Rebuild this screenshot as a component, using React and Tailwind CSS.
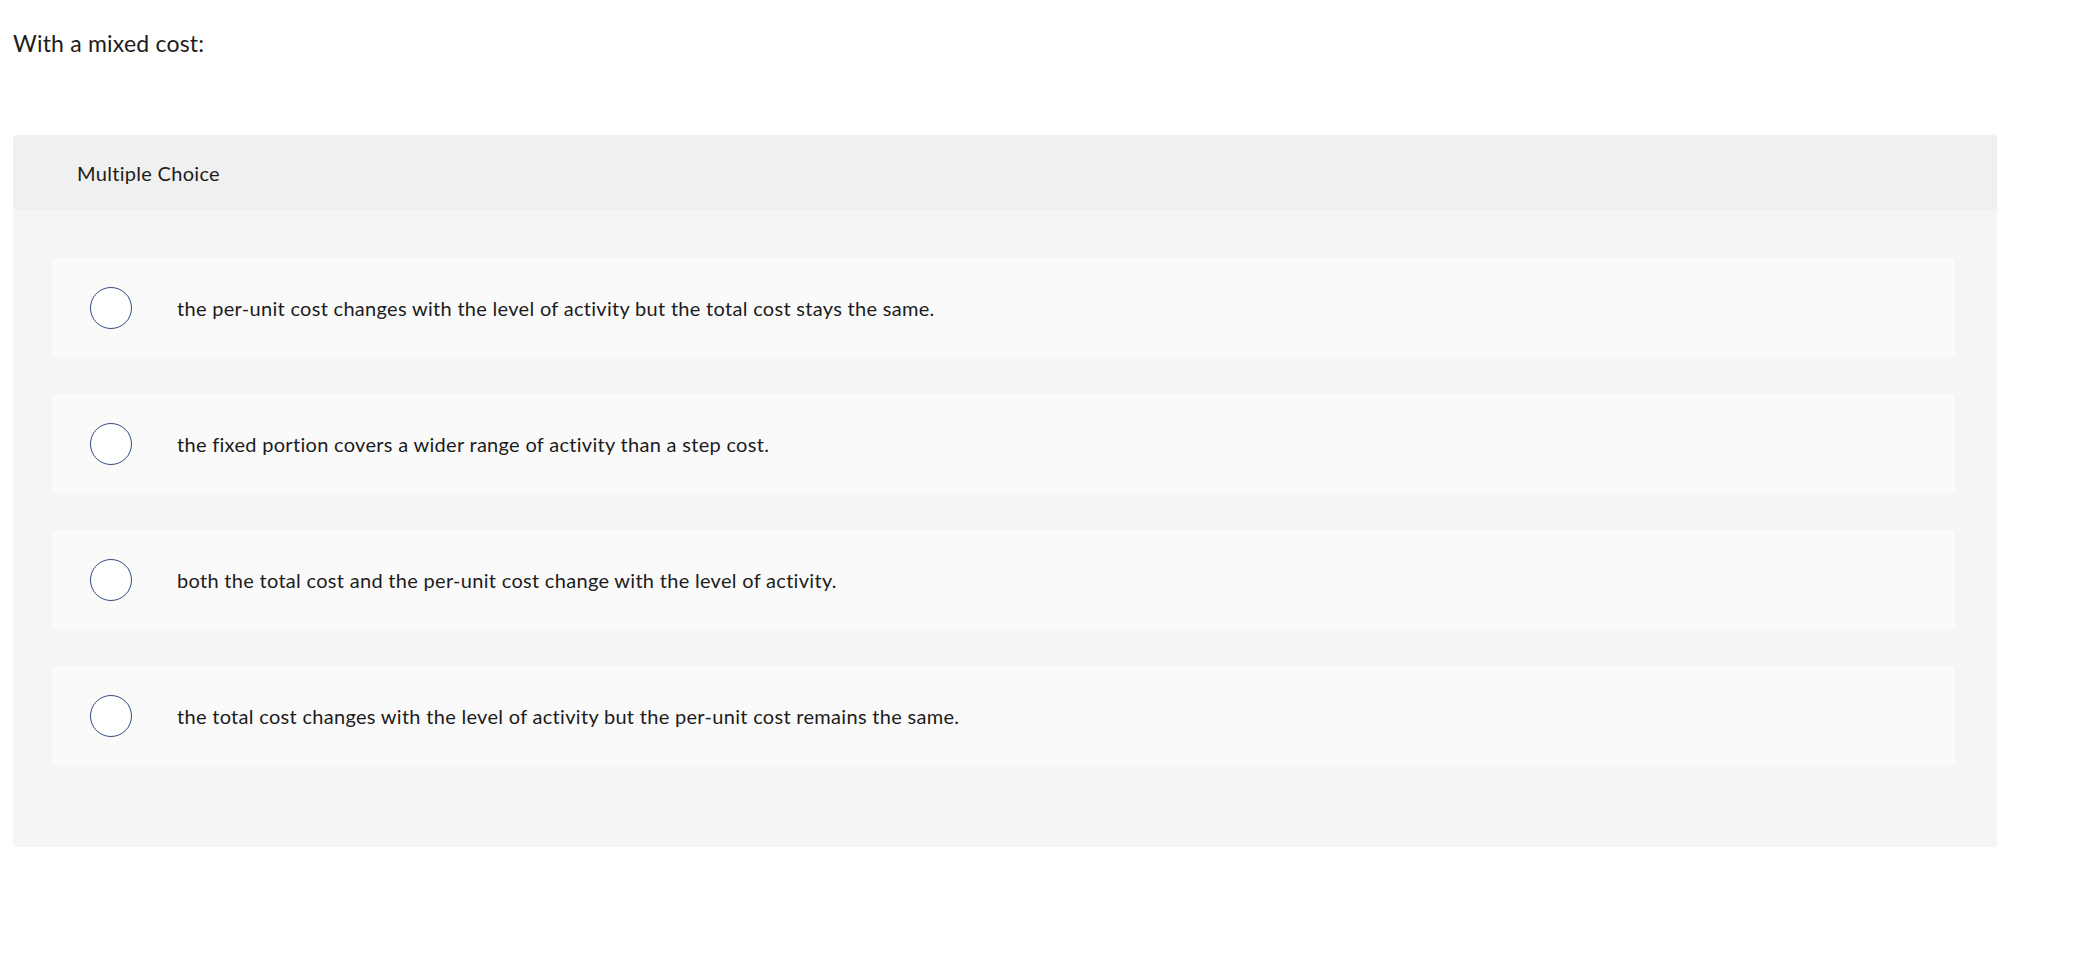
const options = [
  'the per-unit cost changes with the level of activity but the total cost stays the same.',
  'the fixed portion covers a wider range of activity than a step cost.',
  'both the total cost and the per-unit cost change with the level of activity.',
  'the total cost changes with the level of activity but the per-unit cost remains the same.',
];

function Option({ label }) {
  return (
    <label className="flex h-[99px] items-center rounded-[4px] bg-[#fafafa] pl-[38px] cursor-pointer">
      <span className="block h-[42px] w-[42px] shrink-0 rounded-full border-[1.5px] border-[#2f4f80] bg-white" />
      <span className="ml-[45px] text-[20px] leading-[24px] tracking-[0.3px] text-[#1c1c1c]">{label}</span>
    </label>
  );
}

export default function App() {
  return (
    <div className="min-h-screen bg-white font-['Lato',sans-serif] text-[#1c1c1c]">
      <p className="pl-[13px] pt-[29px] text-[23px] leading-[28px] tracking-[0.2px]">With a mixed cost:</p>

      <div className="ml-[13px] mt-[78px] w-[1984px] overflow-hidden rounded-[4px] bg-[#f5f5f5]">
        <div className="flex h-[75px] items-center bg-[#f0f0f0] pl-[64px] text-[20px] leading-[24px] tracking-[0.3px]">
          Multiple Choice
        </div>
        <div className="flex flex-col gap-[37px] pl-[39px] pr-[42px] pt-[48px] pb-[82px]">
          {options.map((o) => (
            <Option key={o} label={o} />
          ))}
        </div>
      </div>
    </div>
  );
}
